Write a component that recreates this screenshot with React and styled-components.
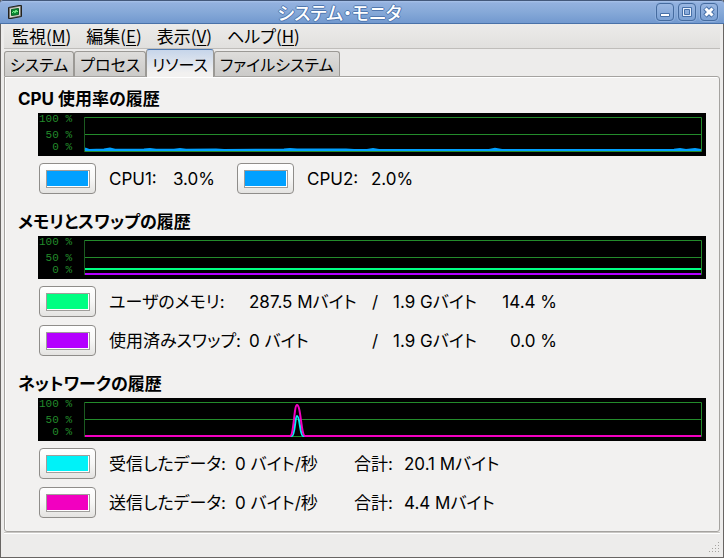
import React, { useState } from "react";
import styled, { createGlobalStyle } from "styled-components";

const menus = [
    { name: "監視", hotkey: "M" },
    { name: "編集", hotkey: "E" },
    { name: "表示", hotkey: "V" },
    { name: "ヘルプ", hotkey: "H" },
];

const tabs = ["システム", "プロセス", "リソース", "ファイルシステム"];

const cpus = [
    { id: "cpu1", name: "CPU1:", value: "3.0%", color: "#00a0ff" },
    { id: "cpu2", name: "CPU2:", value: "2.0%", color: "#00a0ff" },
];

const memory = [
    {
        id: "user-memory",
        name: "ユーザのメモリ:",
        used: "287.5 Mバイト",
        total: "1.9 Gバイト",
        percent: "14.4 %",
        color: "#00ff82",
    },
    {
        id: "used-swap",
        name: "使用済みスワップ:",
        used: "0 バイト",
        total: "1.9 Gバイト",
        percent: "0.0 %",
        color: "#b400ff",
    },
];

const network = [
    {
        id: "received",
        name: "受信したデータ:",
        speed: "0 バイト/秒",
        total: "20.1 Mバイト",
        color: "#00f2f8",
    },
    {
        id: "sent",
        name: "送信したデータ:",
        speed: "0 バイト/秒",
        total: "4.4 Mバイト",
        color: "#f200c0",
    },
];

const cpuLines = [
    {
        color: "#00a0ff",
        path: "M1 31.5 L5 33 L20 32.5 L26 31.5 L31 32.7 L60 32.5 L66 32 L72 32.7 L90 32.7 L96 32 L102 32.8 L132 32.4 L140 33 L200 32.6 L206 32 L213 32.6 L262 32.4 L270 33 L283 33 L289 32 L295 33 L405 33 L411 31.8 L418 33 L590 32.8 L596 32 L602 33 L611 32 L617 33",
    },
    {
        color: "#00a0ff",
        path: "M1 33 L617 33",
    },
];

const memoryLines = [
    { color: "#00ff82", path: "M1 29 L617 29" },
    { color: "#b400ff", path: "M1 34 L617 34" },
];

const networkLines = [
    {
        color: "#00f2f8",
        path: "M1 34 L208 34 C211 34 211 14 213 14 C216 14 216 34 219 34 L617 34",
    },
    {
        color: "#f200c0",
        path: "M1 34 L206 34 C210 34 210 3 213 3 C217 3 217 34 221 34 L617 34",
    },
];

function AppIcon() {
    return (
        <svg width="16" height="16" viewBox="0 0 16 16" aria-hidden="true">
            <path d="M1.5 3.5 L12 1.5 L14.5 1.5 V12.5 L4 14.5 H1.5 Z" fill="#77756f" stroke="#22221f" />
            <path d="M3 4.5 L13 2.5 V11.5 L3 13.5 Z" fill="#dcdad3" />
            <path d="M4.5 5.5 L11.5 4.5 V10.5 L4.5 11.5 Z" fill="#0b8a34" stroke="#075f22" />
            <path d="M5 9 L6 8 L7 7 L8 9 L9 6 L10 8 L11 7" fill="none" stroke="#7df08e" />
        </svg>
    );
}

function History({ lines, label }) {
    return (
        <Graph>
            <Scale>
                <span>100 %</span>
                <span>50 %</span>
                <span>0 %</span>
            </Scale>
            <Plot viewBox="0 0 618 35" preserveAspectRatio="none" role="img" aria-label={label}>
                <path
                    d="M0 0.5 H617.5 V34.5 H0 M0 17.5 H617"
                    fill="none"
                    stroke="#238b2b"
                />
                <path d="M0 0 V35" stroke="#1b5a20" strokeWidth="2" />
                {lines.map(({ color, path }, index) => (
                    <path key={index} d={path} fill="none" stroke={color} strokeWidth="2" />
                ))}
            </Plot>
        </Graph>
    );
}

function ColorButton({ id, color }) {
    return (
        <SwatchButton type="button" aria-labelledby={id}>
            <Swatch $color={color} />
        </SwatchButton>
    );
}

function App() {
    const [activeTab, setActiveTab] = useState("リソース");

    return (
        <>
            <GlobalStyle />
            <Window>
                <TitleBar>
                    <AppIcon />
                    <Title>システム・モニタ</Title>
                    <WindowButtons>
                        <WindowButton type="button" aria-label="最小化">
                            <svg width="16" height="16" viewBox="0 0 16 16">
                                <path d="M3.5 9.5 H12.5 V12.5 H3.5 Z" fill="#fff" stroke="#4670a9" />
                            </svg>
                        </WindowButton>
                        <WindowButton type="button" aria-label="最大化">
                            <svg width="16" height="16" viewBox="0 0 16 16">
                                <path
                                    d="M3.5 3.5 H12.5 V12.5 H3.5 Z M5.5 5.5 V10.5 H10.5 V5.5 Z"
                                    fill="#e8effa"
                                    fillRule="evenodd"
                                    stroke="#4670a9"
                                />
                            </svg>
                        </WindowButton>
                        <WindowButton type="button" aria-label="閉じる">
                            <svg width="16" height="16" viewBox="0 0 16 16">
                                <path d="M4 4 L12 12 M12 4 L4 12" stroke="#4670a9" strokeWidth="5" />
                                <path d="M4.5 4.5 L11.5 11.5 M11.5 4.5 L4.5 11.5" stroke="#fff" strokeWidth="3" />
                            </svg>
                        </WindowButton>
                    </WindowButtons>
                </TitleBar>
                <MenuBar>
                    {menus.map(({ name, hotkey }) => (
                        <MenuButton type="button" key={hotkey}>
                            {name}(<u>{hotkey}</u>)
                        </MenuButton>
                    ))}
                </MenuBar>
                <TabList role="tablist">
                    {tabs.map((tab) => (
                        <Tab
                            type="button"
                            role="tab"
                            key={tab}
                            aria-selected={tab === activeTab}
                            $active={tab === activeTab}
                            onClick={() => setActiveTab(tab)}
                        >
                            {tab}
                        </Tab>
                    ))}
                </TabList>
                <Panel role="tabpanel">
                    <section>
                        <Heading>CPU 使用率の履歴</Heading>
                        <History lines={cpuLines} label="CPU" />
                        <CpuLegend>
                            {cpus.map(({ id, name, value, color }) => (
                                <CpuItem key={id}>
                                    <ColorButton id={id} color={color} />
                                    <span id={id}>{name}</span>
                                    <span>{value}</span>
                                </CpuItem>
                            ))}
                        </CpuLegend>
                    </section>
                    <section>
                        <Heading>メモリとスワップの履歴</Heading>
                        <History lines={memoryLines} label="メモリ" />
                        <Legend>
                            {memory.map(({ id, name, used, total, percent, color }) => (
                                <MemoryRow key={id}>
                                    <ColorButton id={id} color={color} />
                                    <span id={id}>{name}</span>
                                    <span>{used}</span>
                                    <span>/</span>
                                    <span>{total}</span>
                                    <Percent>{percent}</Percent>
                                </MemoryRow>
                            ))}
                        </Legend>
                    </section>
                    <section>
                        <Heading>ネットワークの履歴</Heading>
                        <History lines={networkLines} label="ネットワーク" />
                        <Legend>
                            {network.map(({ id, name, speed, total, color }) => (
                                <NetworkRow key={id}>
                                    <ColorButton id={id} color={color} />
                                    <span id={id}>{name}</span>
                                    <span>{speed}</span>
                                    <span>合計:</span>
                                    <span>{total}</span>
                                </NetworkRow>
                            ))}
                        </Legend>
                    </section>
                </Panel>
                <StatusBar>
                    <svg width="12" height="12" viewBox="0 0 12 12" aria-hidden="true">
                        <path
                            d="M10 1.5h1M7 4.5h1M10 4.5h1M4 7.5h1M7 7.5h1M10 7.5h1M1 10.5h1M4 10.5h1M7 10.5h1M10 10.5h1"
                            stroke="#a5a39f"
                        />
                    </svg>
                </StatusBar>
            </Window>
        </>
    );
}

export default App;

const GlobalStyle = createGlobalStyle`
    * {
        box-sizing: border-box;
    }
    body {
        margin: 0;
        background: #edeceb;
        color: #000;
        font-family: "Noto Sans CJK JP", sans-serif;
        font-size: 17px;
        font-weight: 400;
        line-height: 24px;
        font-feature-settings: "palt";
    }
    button {
        margin: 0;
        padding: 0;
        border: 0;
        background: none;
        color: inherit;
        font: inherit;
        font-feature-settings: inherit;
    }
`;

const Window = styled.div`
    display: flex;
    flex-direction: column;
    min-height: 100vh;
    border: 1px solid #686563;
    border-top: 0;
    background: #edeceb;
`;

const TitleBar = styled.header`
    display: flex;
    align-items: center;
    height: 24px;
    margin: 0 -1px;
    padding: 0 6px 0 7px;
    border-top: 1px solid #43587b;
    border-bottom: 1px solid #4971a8;
    border-radius: 3px 3px 0 0;
    background: linear-gradient(#a8c2ea, #93b1df 2px, #86a9d8 50%, #7299cf);
`;

const Title = styled.h1`
    flex: 1;
    margin: 0;
    color: #fff;
    font-size: 18px;
    font-weight: 500;
    line-height: 22px;
    text-align: center;
    text-shadow: 1px 0 #4f77af, -1px 0 #4f77af, 0 1px #4f77af, 0 -1px #4f77af;
`;

const WindowButtons = styled.div`
    display: flex;
    gap: 4px;
`;

const WindowButton = styled.button`
    display: flex;
    width: 18px;
    height: 18px;
    border: 1px solid #456b9f;
    border-radius: 4px;
    background: linear-gradient(#9ab7e2, #7ba1d4);
    box-shadow: 0 0 0 1px #8fb0de;
`;

const MenuBar = styled.nav`
    display: flex;
    gap: 15px;
    height: 25px;
    margin: 0 3px;
    padding-left: 8px;
    border-bottom: 1px solid #bfbdba;
    background: linear-gradient(#ecebea, #e1e0de);
`;

const MenuButton = styled.button`
    white-space: nowrap;

    u {
        text-underline-offset: 2px;
    }
`;

const TabList = styled.div`
    display: flex;
    align-items: flex-end;
    height: 27px;
    margin: 0 3px;
`;

const Tab = styled.button`
    height: ${({ $active }) => ($active ? "28px" : "25px")};
    margin-bottom: ${({ $active }) => ($active ? "-1px" : "0")};
    padding: 0 5px;
    border: 1px solid #9b9995;
    border-bottom: 0;
    border-top-color: ${({ $active }) => ($active ? "#4c78b0" : "#9b9995")};
    border-radius: 3px 3px 0 0;
    background: ${({ $active }) =>
        $active
            ? "linear-gradient(#c6d5ea, #f2f1f0 85%)"
            : "linear-gradient(#dedddb, #cbcac8)"};
    font-size: 16px;
    white-space: nowrap;
    z-index: ${({ $active }) => ($active ? 1 : 0)};
`;

const Panel = styled.main`
    display: flex;
    flex-direction: column;
    flex: 1;
    gap: 15px;
    margin: 0 3px;
    padding: 9px 13px 13px;
    border: 1px solid #a5a3a0;
    border-radius: 0 3px 3px 3px;
    background: #f2f1f0;
    box-shadow: inset 1px 1px #fff;
    font-family: Inter, "Noto Sans CJK JP", sans-serif;
`;

const Heading = styled.h2`
    margin: 0 0 1px;
    font-size: 17px;
    font-weight: 700;
    line-height: 26px;
`;

const Graph = styled.div`
    display: flex;
    height: 43px;
    margin-left: 20px;
    padding: 4px 4px 4px 0;
    background: #000;
`;

const Scale = styled.div`
    display: flex;
    flex-direction: column;
    flex: 0 0 46px;
    margin: -4px 0;
    padding-right: 12px;
    color: #238b2b;
    font-family: "Liberation Mono", monospace;
    font-size: 11px;
    line-height: 12px;
    text-align: right;
    white-space: pre;

    span:first-child {
        margin-bottom: 4px;
    }
`;

const Plot = styled.svg`
    flex: 1;
    min-width: 0;
    height: 35px;
`;

const Legend = styled.div`
    display: flex;
    flex-direction: column;
    gap: 8px;
    margin: 7px 0 0 21px;
    white-space: nowrap;
`;

const CpuLegend = styled(Legend)`
    flex-direction: row;
    gap: 24px;
`;

const CpuItem = styled.div`
    display: grid;
    grid-template-columns: 70px 64px 40px;
    align-items: center;
`;

const MemoryRow = styled.div`
    display: grid;
    grid-template-columns: 70px 140px 123px 21px 86px 78px;
    align-items: center;
`;

const NetworkRow = styled.div`
    display: grid;
    grid-template-columns: 70px 126px 119px 50px auto;
    align-items: center;
`;

const Percent = styled.span`
    text-align: right;
`;

const SwatchButton = styled.button`
    display: flex;
    align-items: center;
    justify-content: center;
    width: 57px;
    height: 31px;
    border: 1px solid #8f8d8a;
    border-radius: 4px;
    background: linear-gradient(#fff, #f7f7f6 50%, #e4e3e1);
`;

const Swatch = styled.span`
    width: 44px;
    height: 18px;
    border: 1px solid #a09e9b;
    background: ${({ $color }) => $color};
    box-shadow: inset -1px -1px #fff;
`;

const StatusBar = styled.footer`
    display: flex;
    align-items: flex-end;
    justify-content: flex-end;
    height: 25px;
    margin: 0 3px;
    padding-bottom: 4px;
    border-top: 1px solid #c9c7c4;
    box-shadow: inset 0 1px #fff;
`;
